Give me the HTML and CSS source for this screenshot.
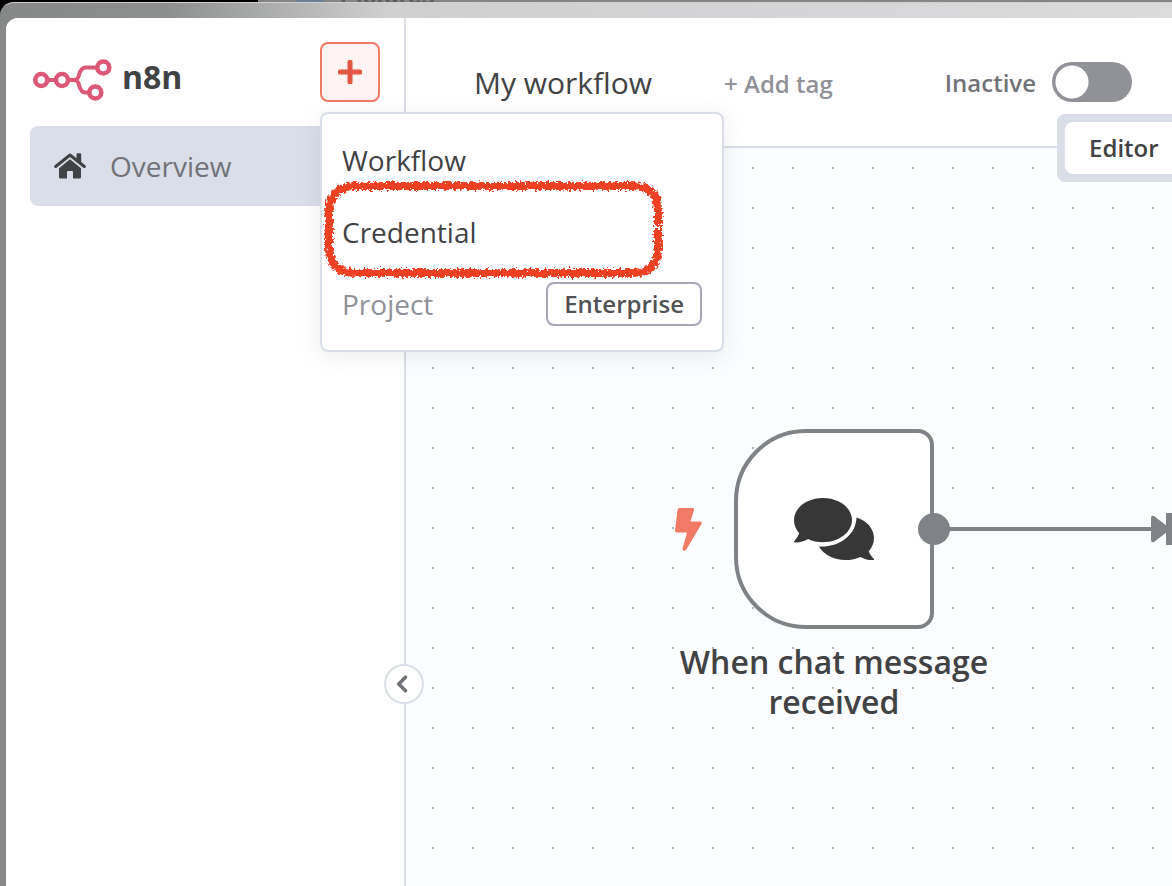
FILE: index.html
```html
<!DOCTYPE html>
<html lang="en">
<head>
<meta charset="utf-8">
<title>My workflow</title>
<link rel="stylesheet" href="styles.css">
</head>
<body>
<div class="desktop-strip"><span class="desktop-dot"></span><span>Pictures</span></div>
<div class="window">
  <div class="app">
    <aside class="sidebar">
      <div class="brand-row">
        <div class="brand">
          <svg class="brand-mark" viewBox="0 0 80 44" width="80" height="44" fill="none" stroke="#dc5876" stroke-width="4.600" aria-hidden="true">
            <circle cx="9.300" cy="23" r="6"/>
            <circle cx="30" cy="23" r="6"/>
            <circle cx="71.300" cy="10.500" r="6"/>
            <circle cx="63.300" cy="35.500" r="6"/>
            <path stroke-width="4" d="M15 23h9M36 23h6c3 0 4-1 5-5s3-7.500 7-7.500h11M42 23c3 0 4 1 5 5s3 7.500 6 7.500h4"/>
          </svg>
          <span class="brand-name">n8n</span>
        </div>
        <div class="create">
          <button class="create-button" type="button" aria-label="Create">
            <svg viewBox="0 0 24 24" width="24" height="24" fill="#e25742" aria-hidden="true"><path d="M9.500 1.500Q9.500 0 11 0h2q1.500 0 1.500 1.500v8h8q1.500 0 1.500 1.500v2q0 1.500-1.500 1.500h-8v8q0 1.500-1.500 1.500h-2q-1.500 0-1.500-1.500v-8h-8Q0 14.500 0 13v-2q0-1.500 1.500-1.500h8z"/></svg>
          </button>
          <div class="menu">
            <button class="menu-item" type="button">Workflow</button>
            <button class="menu-item" type="button">Credential</button>
            <button class="menu-item menu-item-muted" type="button">Project <span class="badge">Enterprise</span></button>
            <svg class="marker" viewBox="0 0 344 104" width="344" height="104" fill="none" aria-hidden="true">
              <defs>
                <filter id="crayon" x="0" y="0" width="344" height="104" filterUnits="userSpaceOnUse">
                  <feTurbulence type="fractalNoise" baseFrequency="0.4" numOctaves="2" seed="4" result="grain"/>
                  <feDisplacementMap in="SourceGraphic" in2="grain" scale="8" xChannelSelector="R" yChannelSelector="G"/>
                </filter>
              </defs>
              <path filter="url(#crayon)" stroke="#ee3f24" stroke-width="8" d="M336 50V34Q336 10 310 10H34Q7 10 7 36V72Q7 97 34 97H310Q336 97 336 72V53"/>
            </svg>
          </div>
        </div>
      </div>
      <nav class="nav">
        <a class="nav-link" href="#overview">
          <svg viewBox="0 0 32 26" width="32" height="26" aria-hidden="true">
            <path fill="none" stroke="#414244" stroke-width="3" stroke-linecap="round" stroke-linejoin="round" d="M1.700 13.500 16 2l14.300 11.500"/>
            <path fill="#414244" d="M22.500 1.200q0-1 1-1h2.700q1 0 1 1v9.500l-4.700-4zM16 6.200l11 9V24q0 1.500-1.500 1.500H19V19q0-1-1-1h-4q-1 0-1 1v6.500H6.500Q5 25.500 5 24v-8.800z"/>
          </svg>
          Overview
        </a>
      </nav>
      <button class="collapse" type="button" aria-label="Collapse sidebar">
        <svg viewBox="0 0 12 18" width="12" height="18" fill="none" stroke="#717378" stroke-width="3.500" stroke-linecap="round" stroke-linejoin="round" aria-hidden="true"><path d="M9.500 2.200 2.700 9l6.800 6.800"/></svg>
      </button>
    </aside>
    <main class="main">
      <header class="header">
        <h1 class="title">My workflow</h1>
        <button class="add-tag" type="button">+ Add tag</button>
        <label class="activate">Inactive <input class="switch" type="checkbox" role="switch"></label>
        <div class="tabs"><button class="tab" type="button">Editor</button></div>
      </header>
      <section class="canvas">
        <svg class="bolt" viewBox="0 0 27 43" width="27" height="43" aria-hidden="true"><path fill="#f17a66" d="M4.500 0h13q2 0 1.500 2l-3.500 11.500h9.700q2.300.3 1.300 2.500L11.300 41.500q-1 1.500-2.500 1.300-1.500-.3-1.300-2L12 24.500H1.700Q0 24.500 0 22.800L2.500 2Q2.800 0 4.500 0z"/></svg>
        <div class="node">
          <svg viewBox="0 0 80 62" width="80" height="62" fill="#373737" aria-hidden="true">
            <path d="M29 0c16 0 29 9.800 29 22S45 44.200 29 44.200c-5.500 0-10.600-1-15-3.200C10 43.500 5 44.800.8 44.400q-1.300-.4-.3-1.600 3.500-4 4.700-7.600C1.800 31.500 0 27 0 22 0 9.800 13 0 29 0z"/>
            <path d="M62.500 19.500C73 22.800 80 31 80 40c0 5-1.800 9.500-5.200 13.200 1 3 3 5.600 5 7.600q.7 1.200-.6 1.300c-4.700.2-9.200-1.100-12.700-3.200-4.500 2-9.500 3.100-15 3.100-12 0-22-5.500-26.500-13.500 20.500 1 37-11.500 37.500-29z"/>
          </svg>
        </div>
        <svg class="edge" viewBox="0 0 254 34" width="254" height="34" fill="#7f8287" aria-hidden="true">
          <path d="M16 15h220v4H16z"/><circle cx="16" cy="17" r="16"/>
          <path d="M233 6q0-3 3-2l15.500 12v2L236 30q-3 1-3-2zM248 1h6v32h-6z"/>
        </svg>
        <p class="node-label">When chat message received</p>
      </section>
    </main>
  </div>
</div>
</body>
</html>
```

FILE: styles.css
```css
* { box-sizing: border-box; }

body {
  margin: 0;
  min-height: 100vh;
  display: flex;
  flex-direction: column;
  overflow: hidden;
  background: #000;
  color: #414244;
  font-family: "Open Sans", "Noto Sans", sans-serif;
}

button {
  margin: 0;
  padding: 0;
  border: 0;
  background: none;
  color: inherit;
  font: inherit;
}

.desktop-strip {
  display: flex;
  align-items: flex-end;
  gap: 16px;
  height: 2px;
  padding-left: 296px;
  overflow: hidden;
  background: linear-gradient(90deg, #000 22%, #858585 22%);
  color: #5c5c5c;
  font: 700 24px/12px "Liberation Sans", sans-serif;
}

.desktop-dot {
  width: 28px;
  height: 2px;
  background: #6c7d96;
}

.window {
  flex: 1;
  display: flex;
  padding: 15px 0 0 6px;
  border-top: 1px solid #d0d0d0;
  border-top-left-radius: 14px;
  background: linear-gradient(90deg, #868887 0, #8d8f8e 14%, #a5a6a6 21%, #cfcfcf 33%, #d5d5d8 70%, #dadbda 100%);
}

.app {
  flex: 1;
  display: flex;
  overflow: hidden;
  border-top-left-radius: 12px;
  background: #fff;
}

.sidebar {
  position: relative;
  z-index: 1;
  flex: 0 0 400px;
  padding: 24px;
  border-right: 2px solid #dadee8;
  background: #fff;
}

.brand-row {
  display: flex;
  justify-content: space-between;
  height: 84px;
}

.brand {
  display: flex;
  align-items: center;
  gap: 10px;
  height: 72px;
}

.brand-mark { margin: 2px 0 0 2px; }

.brand-name {
  padding-bottom: 4px;
  font-size: 32px;
  font-weight: 700;
}

.create { position: relative; }

.create-button {
  display: grid;
  place-items: center;
  width: 60px;
  height: 60px;
  border: 2px solid #f17a66;
  border-radius: 8px;
  background: #fff4f3;
}

.menu {
  position: absolute;
  z-index: 2;
  top: 70px;
  left: 0;
  width: 404px;
  padding: 10px 0;
  border: 2px solid #dadee8;
  border-radius: 8px;
  background: #fff;
  box-shadow: 0 4px 24px rgba(0, 0, 0, 0.08);
}

.menu-item {
  display: flex;
  align-items: center;
  justify-content: space-between;
  width: 100%;
  height: 72px;
  padding: 0 20px;
  font-size: 28px;
}

.menu-item-muted { color: #909298; }

.badge {
  padding: 0 16px;
  border: 2px solid #a3a6b5;
  border-radius: 8px;
  color: #525356;
  font-size: 24px;
  font-weight: 600;
  line-height: 40px;
}

.marker {
  position: absolute;
  top: 62px;
  left: 0;
  pointer-events: none;
}

.nav-link {
  display: flex;
  align-items: center;
  gap: 24px;
  height: 80px;
  padding: 0 24px;
  border-radius: 8px;
  background: #dadee8;
  color: #717378;
  font-size: 28px;
  text-decoration: none;
}

.collapse {
  position: absolute;
  top: 646px;
  right: -20px;
  display: grid;
  place-items: center;
  width: 40px;
  height: 40px;
  padding-right: 4px;
  border: 2px solid #dadee8;
  border-radius: 50%;
  background: #fff;
}

.main {
  flex: 1;
  display: flex;
  flex-direction: column;
  min-width: 0;
}

.header {
  position: relative;
  display: flex;
  align-items: center;
  height: 130px;
  padding: 0 40px 0 68px;
  border-bottom: 2px solid #dadee8;
}

.title {
  margin: 0;
  font-size: 30px;
  font-weight: 400;
}

.add-tag {
  margin-left: 72px;
  padding-top: 2px;
  color: #909298;
  font-size: 24px;
  font-weight: 600;
}

.activate {
  display: flex;
  align-items: center;
  gap: 16px;
  margin-left: auto;
  color: #717378;
  font-size: 24px;
  font-weight: 600;
}

.switch {
  appearance: none;
  width: 80px;
  height: 40px;
  margin: 0;
  border-radius: 20px;
  background: radial-gradient(circle at 20px 20px, #fff 16px, #909298 17px);
}

.tabs {
  position: absolute;
  z-index: 1;
  top: 96px;
  left: 85%;
  padding: 8px;
  border-radius: 8px;
  background: #dadee8;
}

.tab {
  height: 52px;
  padding: 0 24px 2px;
  border-radius: 8px;
  background: #fff;
  font-size: 24px;
  font-weight: 600;
}

.canvas {
  position: relative;
  flex: 1;
  overflow: hidden;
  background: #fbfcfe conic-gradient(from 270deg at 2px 2px, #b4b5b9 90deg, transparent 0) 26px 19px / 40px 40px;
}

.bolt {
  position: absolute;
  top: 360px;
  left: 269px;
}

.node {
  position: absolute;
  top: 281px;
  left: 328px;
  display: grid;
  place-items: center;
  width: 200px;
  height: 200px;
  border: 4px solid #7f8287;
  border-radius: 72px 16px 16px 72px;
  background: #fff;
}

.edge {
  position: absolute;
  top: 364px;
  left: 512px;
}

.node-label {
  position: absolute;
  top: 494px;
  left: 258px;
  width: 340px;
  margin: 0;
  font-size: 32px;
  font-weight: 600;
  line-height: 40px;
  text-align: center;
}
```
